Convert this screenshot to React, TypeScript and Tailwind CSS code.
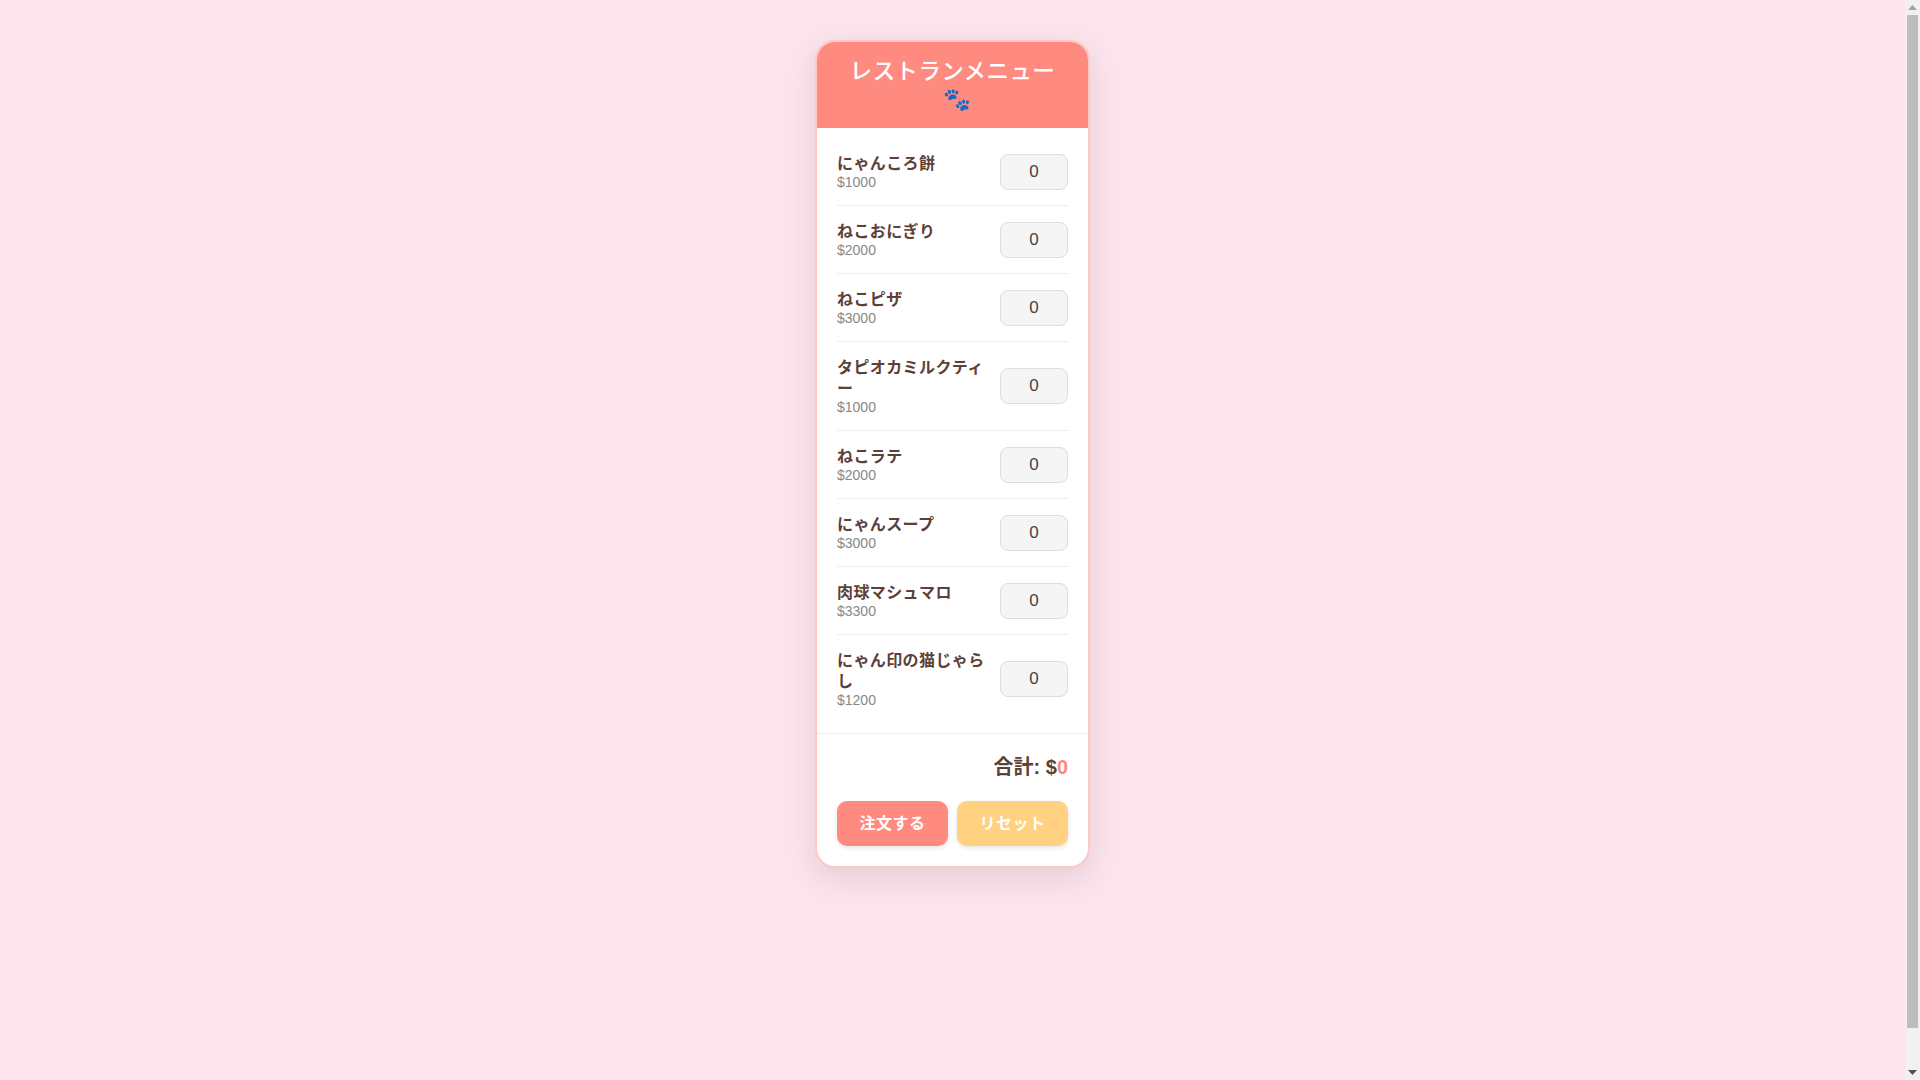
const items = [
  { name: 'にゃんころ餅', price: 1000 },
  { name: 'ねこおにぎり', price: 2000 },
  { name: 'ねこピザ', price: 3000 },
  { name: 'タピオカミルクティー', price: 1000 },
  { name: 'ねこラテ', price: 2000 },
  { name: 'にゃんスープ', price: 3000 },
  { name: '肉球マシュマロ', price: 3300 },
  { name: 'にゃん印の猫じゃらし', price: 1200 },
];

function Scrollbar() {
  return (
    <aside className="flex h-full w-[15px] shrink-0 flex-col bg-[#f1f1f1]">
      <div className="flex h-[15px] shrink-0 items-center justify-center">
        <svg width="9" height="5" viewBox="0 0 9 5" className="fill-[#a3a3a3]">
          <path d="M4.5 0 L9 5 L0 5 Z" />
        </svg>
      </div>
      <div className="mx-[2px] h-[1013px] bg-[#bdbdbd]" />
      <div className="flex-1" />
      <div className="flex h-[15px] shrink-0 items-center justify-center">
        <svg width="9" height="5" viewBox="0 0 9 5" className="fill-[#505050]">
          <path d="M0 0 L9 0 L4.5 5 Z" />
        </svg>
      </div>
    </aside>
  );
}

export default function App() {
  return (
    <div className="flex h-screen overflow-hidden bg-[#fce4ec] font-['Liberation_Sans','Noto_Sans_CJK_JP',sans-serif] text-[#5d4037]">
      <main className="flex-1 pt-10">
        <div className="mx-auto w-[275px] overflow-hidden rounded-[20px] border-2 border-[#ffc8c4] bg-white shadow-[0_10px_30px_rgba(0,0,0,0.1)]">
          <div className="bg-[#ff8a80] px-5 pt-4 pb-3.5 text-center text-[22.4px] leading-7 font-medium tracking-[0.5px] text-white">
            レストランメニュー<span className="ml-2.5">🐾</span>
          </div>
          <ul className="px-5 py-2.5">
            {items.map((item) => (
              <li key={item.name} className="flex items-center gap-2.5 border-b border-[#eeeeee] py-[15px] last:border-b-0">
                <div className="flex-1">
                  <div className="text-base leading-[21px] font-semibold tracking-[0.4px]">{item.name}</div>
                  <div className="text-sm leading-4 text-[#888888]">${item.price}</div>
                </div>
                <input
                  readOnly
                  value="0"
                  className="h-9 w-[68px] rounded-lg border border-[#dddddd] bg-[#f5f5f5] text-center text-[17px] text-[#444444]"
                />
              </li>
            ))}
          </ul>
          <div className="border-t border-[#eeeeee] p-5">
            <div className="text-right text-xl leading-[26px] font-bold">
              合計: $<span className="text-[#ff8a80]">0</span>
            </div>
            <div className="mt-[21px] flex gap-[9px]">
              <button className="h-[45px] flex-1 rounded-[10px] bg-[#ff8a80] text-base font-semibold tracking-[0.5px] text-white shadow-[0_2px_5px_rgba(0,0,0,0.1)]">
                注文する
              </button>
              <button className="h-[45px] flex-1 rounded-[10px] bg-[#ffd180] text-base font-semibold tracking-[0.5px] text-white shadow-[0_2px_5px_rgba(0,0,0,0.1)]">
                リセット
              </button>
            </div>
          </div>
        </div>
      </main>
      <Scrollbar />
    </div>
  );
}
